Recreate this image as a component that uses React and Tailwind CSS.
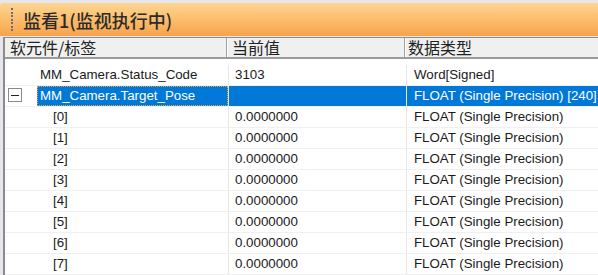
import React from 'react';

const rows = [
  { name: 'MM_Camera.Status_Code', value: '3103', type: 'Word[Signed]', indent: 'pl-[32px]' },
  { name: 'MM_Camera.Target_Pose', value: '', type: 'FLOAT (Single Precision) [240]', indent: 'pl-[32px]', selected: true, toggle: true },
  ...[0, 1, 2, 3, 4, 5, 6, 7].map((i) => ({
    name: `[${i}]`,
    value: '0.0000000',
    type: 'FLOAT (Single Precision)',
    indent: 'pl-[45px]',
  })),
];

const ExpandBox = () => (
  <div className="absolute left-[3px] top-[2px] w-[14px] h-[14px] border border-[#8a8a8a] bg-white flex items-center justify-center">
    <div className="w-[8px] h-[1px] bg-[#222]" />
  </div>
);

const Row = ({ row }) => (
  <div className="relative flex h-[21px] border-b border-[#f0f0f0] text-[13.3px] leading-[20px]">
    {row.toggle && <ExpandBox />}
    <div className={`w-[223px] shrink-0 ${row.indent}`}>
      <div
        className={
          row.selected
            ? 'h-full pl-[3px] bg-[#0078d7] text-white outline outline-1 outline-dotted outline-[#f0a040] -outline-offset-1'
            : 'pl-[3px] text-[#1a1a1a]'
        }
      >
        {row.name}
      </div>
    </div>
    <div
      className={`w-[178px] shrink-0 border-l border-[#e6e6e6] pl-[6px] ${
        row.selected ? 'bg-[#0078d7] text-white' : 'text-[#1a1a1a]'
      }`}
    >
      {row.value}
    </div>
    <div
      className={`flex-1 border-l border-[#e6e6e6] pl-[7px] whitespace-nowrap ${
        row.selected ? 'bg-[#0078d7] text-white' : 'text-[#1a1a1a]'
      }`}
    >
      {row.type}
    </div>
  </div>
);

export default function App() {
  return (
    <div
      className="w-[598px] h-[275px] overflow-hidden bg-[#e7e6ec] pt-[3px]"
      style={{ fontFamily: '"Liberation Sans", "Noto Sans CJK SC", sans-serif' }}
    >
      {/* title bar */}
      <div className="h-[33px] flex items-center bg-gradient-to-b from-[#fdd592] via-[#fbbd6c] to-[#f8a24a] rounded-tl-[3px]">
        <div className="ml-[11px] flex flex-col gap-[1.5px]">
          {[0, 1, 2, 3, 4, 5, 6].map((i) => (
            <div key={i} className="w-[2px] h-[2px] bg-[#6a6a8a]" />
          ))}
        </div>
        <div
          className="ml-[10px] text-[18px] font-medium text-[#2b2b2b] leading-none"
          style={{ fontFamily: '"Noto Sans CJK SC", sans-serif' }}
        >
          监看1(监视执行中)
        </div>
      </div>

      {/* table */}
      <div className="mt-[1px] ml-[3px] h-[240px] bg-white border-l-[2px] border-t border-[#8c8c8c]">
        <div
          className="flex h-[21px] bg-[#f0f0f0] border-b-[2px] border-[#9a9a9a] text-[16px] leading-[19px] text-[#222]"
          style={{ fontFamily: '"Noto Sans CJK SC", sans-serif' }}
        >
          <div className="w-[222px] shrink-0 pl-[5px] border-r border-[#a0a0a0]">软元件/标签</div>
          <div className="w-[178px] shrink-0 pl-[4px] border-r border-[#a0a0a0] border-l border-l-white">当前值</div>
          <div className="flex-1 pl-[2px] border-l border-l-white">数据类型</div>
        </div>
        <div className="pt-[6px]">
          {rows.map((row, i) => (
            <Row key={i} row={row} />
          ))}
        </div>
      </div>
    </div>
  );
}
